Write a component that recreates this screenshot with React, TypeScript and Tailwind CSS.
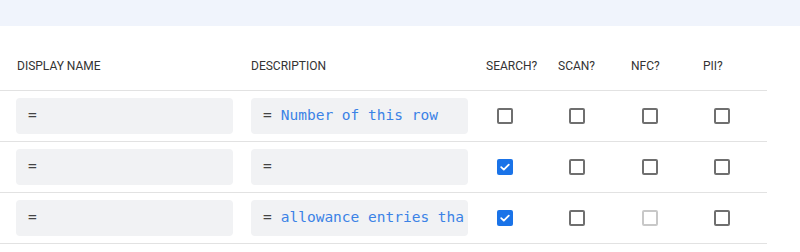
const ROWS = [
  { name: "", desc: "Number of this row", flags: [false, false, false, false], disabled: [] as number[] },
  { name: "", desc: "", flags: [true, false, false, false], disabled: [] as number[] },
  { name: "", desc: "allowance entries tha", flags: [true, false, false, false], disabled: [2] },
];

const HEADERS = ["SEARCH?", "SCAN?", "NFC?", "PII?"];
const GRID = "grid grid-cols-[251px_235px_72px_73px_72px_64px]";

function Box({ checked, disabled }: { checked: boolean; disabled?: boolean }) {
  if (checked) {
    return (
      <span className="flex h-4 w-4 items-center justify-center rounded-[2px] bg-[#1a73e8]">
        <svg width="12" height="12" viewBox="0 0 12 12" fill="none">
          <path d="M2.2 6.2 L4.8 8.6 L9.8 3.6" stroke="#fff" strokeWidth="1.8" strokeLinecap="round" strokeLinejoin="round" />
        </svg>
      </span>
    );
  }
  return (
    <span
      className={`block h-4 w-4 rounded-[2px] border-2 ${disabled ? "border-[#c8c8c8]" : "border-[#6f6f6f]"}`}
    />
  );
}

function Field({ text }: { text: string }) {
  return (
    <div className="flex h-9 w-[217px] items-center overflow-hidden whitespace-nowrap rounded-[4px] bg-[#f1f2f4] pl-3 pr-1 font-['DejaVu_Sans_Mono',monospace] text-[14.5px]">
      <span className="text-[#444]">=</span>
      {text && <span className="ml-[9px] text-[#3b82e6]">{text}</span>}
    </div>
  );
}

export default function App() {
  return (
    <div className="h-[252px] w-[800px] bg-white font-['Roboto',sans-serif]">
      <div className="h-[26px] bg-[#f0f4fc]" />
      <div className="w-[767px]">
        <div className={`${GRID} border-b border-[#e2e2e2] pb-4 pt-8 text-[12px] leading-4 text-[#333]`}>
          <div className="pl-[17px]">DISPLAY NAME</div>
          <div>DESCRIPTION</div>
          {HEADERS.map((h) => (
            <div key={h}>{h}</div>
          ))}
        </div>
        {ROWS.map((r, i) => (
          <div key={i} className={`${GRID} items-center border-b border-[#e2e2e2] py-[7px]`}>
            <div className="pl-4">
              <Field text={r.name} />
            </div>
            <div>
              <Field text={r.desc} />
            </div>
            {r.flags.map((f, j) => (
              <div key={j} className="pl-[11px]">
                <Box checked={f} disabled={r.disabled.includes(j)} />
              </div>
            ))}
          </div>
        ))}
      </div>
    </div>
  );
}
